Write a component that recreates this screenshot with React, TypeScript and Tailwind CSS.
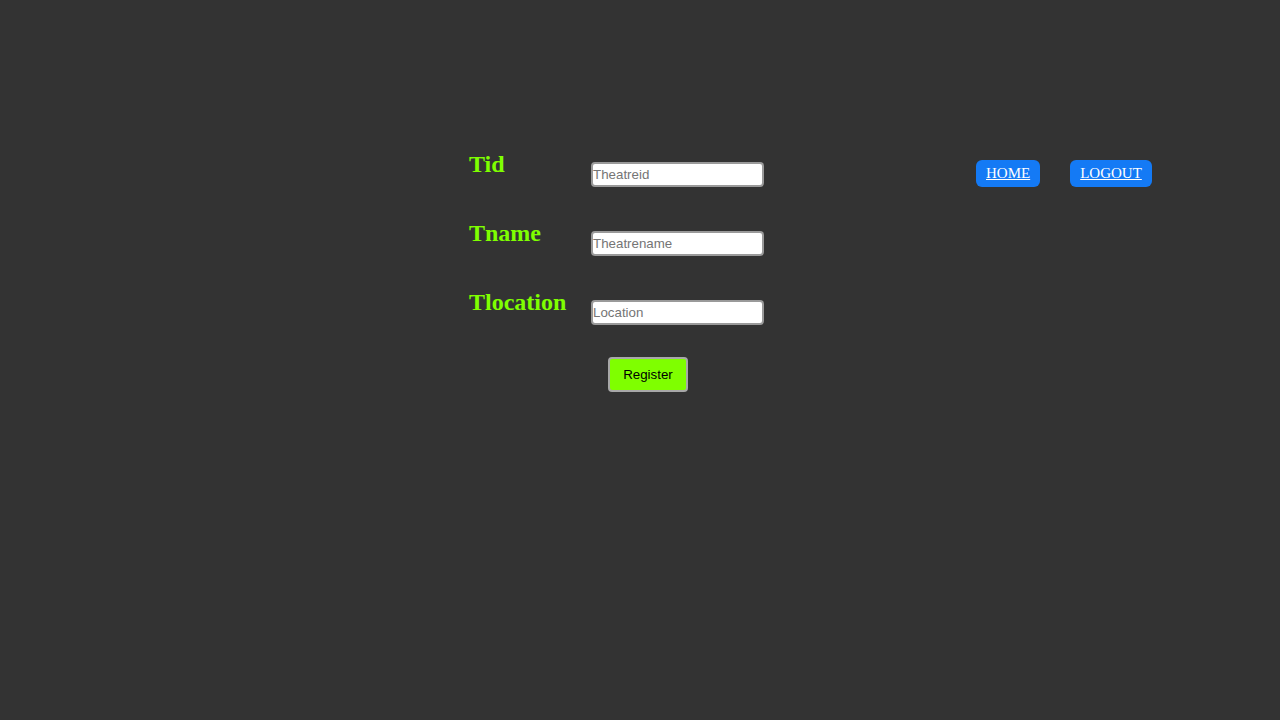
export default function App() {
  const fields = [
    { label: 'Tid', placeholder: 'Theatreid' },
    { label: 'Tname', placeholder: 'Theatrename' },
    { label: 'Tlocation', placeholder: 'Location' },
  ];

  return (
    <div className="min-h-[720px] w-full bg-[#333333] pl-[469px] pt-[151px]">
      <div className="flex items-start">
        <form className="flex flex-col" onSubmit={(e) => e.preventDefault()}>
          {fields.map((f) => (
            <div key={f.label} className="flex h-[69px] items-start">
              <h2 className="w-[122px] font-['Liberation_Serif',serif] text-[24px] font-bold leading-[26.6px] text-[#7fff00]">
                {f.label}
              </h2>
              <input
                type="text"
                placeholder={f.placeholder}
                className="mt-[11px] h-[25px] w-[173px] rounded-[4px] border-2 border-[#9a9a9a] bg-white px-0 font-['Liberation_Sans',Arial,sans-serif] text-[13.33px] text-black outline-none placeholder:text-[#757575]"
              />
            </div>
          ))}
          <div className="-mt-[1px] pl-[139px]">
            <button
              type="submit"
              className="h-[35px] w-[80px] rounded-[4px] border-2 border-[#a8a8a8] bg-[#7fff00] font-['Liberation_Sans',Arial,sans-serif] text-[13.33px] text-black"
            >
              Register
            </button>
          </div>
        </form>

        <nav className="ml-[212px] mt-[9px] flex gap-[30px]">
          <a
            href="#"
            className="flex h-[27px] items-center rounded-[6px] bg-[#147af5] px-[10px] font-['Liberation_Serif',serif] text-[15px] text-white underline"
          >
            HOME
          </a>
          <a
            href="#"
            className="flex h-[27px] items-center rounded-[6px] bg-[#147af5] px-[10px] font-['Liberation_Serif',serif] text-[15px] text-white underline"
          >
            LOGOUT
          </a>
        </nav>
      </div>
    </div>
  );
}
